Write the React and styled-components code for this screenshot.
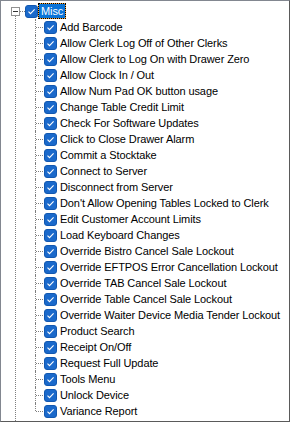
import React from 'react';
import styled, { createGlobalStyle } from 'styled-components';

const GlobalStyle = createGlobalStyle`
  html, body {
    margin: 0;
    padding: 0;
    background: #ffffff;
  }
`;

const items = [
  'Add Barcode',
  'Allow Clerk Log Off of Other Clerks',
  'Allow Clerk to Log On with Drawer Zero',
  'Allow Clock In / Out',
  'Allow Num Pad OK button usage',
  'Change Table Credit Limit',
  'Check For Software Updates',
  'Click to Close Drawer Alarm',
  'Commit a Stocktake',
  'Connect to Server',
  'Disconnect from Server',
  "Don't Allow Opening Tables Locked to Clerk",
  'Edit Customer Account Limits',
  'Load Keyboard Changes',
  'Override Bistro Cancel Sale Lockout',
  'Override EFTPOS Error Cancellation Lockout',
  'Override TAB Cancel Sale Lockout',
  'Override Table Cancel Sale Lockout',
  'Override Waiter Device Media Tender Lockout',
  'Product Search',
  'Receipt On/Off',
  'Request Full Update',
  'Tools Menu',
  'Unlock Device',
  'Variance Report',
];

const TreeFrame = styled.div`
  position: relative;
  box-sizing: border-box;
  width: 290px;
  height: 422px;
  padding-top: 2px;
  border: 1px solid #828790;
  border-right-color: #5a5a5a;
  border-bottom-color: #5a5a5a;
  background: #ffffff;
  overflow: hidden;
  font-family: "Liberation Sans", Arial, sans-serif;
  font-size: 11px;
  letter-spacing: -0.1px;
  color: #000000;

  /* root level tree line */
  &::before {
    content: '';
    position: absolute;
    left: 14px;
    top: 15px;
    bottom: 0;
    border-left: 1px dotted #7f7f7f;
  }
`;

const RootRow = styled.div`
  display: flex;
  align-items: center;
  height: 16px;
  padding-left: 10px;
`;

const Expander = styled.span`
  position: relative;
  z-index: 1;
  box-sizing: border-box;
  display: flex;
  align-items: center;
  justify-content: center;
  width: 9px;
  height: 9px;
  border: 1px solid #919191;
  background: #ffffff;

  &::after {
    content: '';
    width: 5px;
    height: 1px;
    background: #333333;
  }
`;

const Connector = styled.span`
  width: ${(p) => p.$w}px;
  height: 0;
  border-top: 1px dotted #7f7f7f;
`;

const Box = styled.span`
  box-sizing: border-box;
  display: flex;
  align-items: center;
  justify-content: center;
  flex: none;
  width: 13px;
  height: 13px;
  border-radius: 3px;
  background: #1a69cb;
  border: 1px solid #1258b0;
`;

const Label = styled.span`
  box-sizing: border-box;
  height: 16px;
  line-height: 14px;
  padding: 0 2px;
  white-space: nowrap;
  border: 1px solid transparent;
  ${(p) =>
    p.$selected &&
    `
    background: #0a74d8;
    color: #ffffff;
    border-color: #f5a33a;
    outline: 1px dotted #000000;
    outline-offset: -1px;
  `}
`;

const ChildList = styled.div`
  margin-left: 34px;
`;

const ChildRow = styled.div`
  position: relative;
  display: flex;
  align-items: center;
  height: 16px;
  padding-left: 9px;

  &::before {
    content: '';
    position: absolute;
    left: 0;
    top: 0;
    height: ${(p) => (p.$last ? '8px' : '16px')};
    border-left: 1px dotted #7f7f7f;
  }

  &::after {
    content: '';
    position: absolute;
    left: 1px;
    top: 8px;
    width: 7px;
    border-top: 1px dotted #7f7f7f;
  }
`;

const Check = () => (
  <svg width="9" height="9" viewBox="0 0 9 9">
    <path d="M1.5 4.6 L3.5 6.6 L7.6 2.4" fill="none" stroke="#ffffff" strokeWidth="1.1" />
  </svg>
);

const CheckBox = () => (
  <Box>
    <Check />
  </Box>
);

export default function App() {
  return (
    <>
      <GlobalStyle />
      <TreeFrame>
        <RootRow>
          <Expander />
          <Connector $w={5} />
          <CheckBox />
          <Label $selected>Misc</Label>
        </RootRow>
        <ChildList>
          {items.map((item, i) => (
            <ChildRow key={item} $last={i === items.length - 1}>
              <CheckBox />
              <Label>{item}</Label>
            </ChildRow>
          ))}
        </ChildList>
      </TreeFrame>
    </>
  );
}
